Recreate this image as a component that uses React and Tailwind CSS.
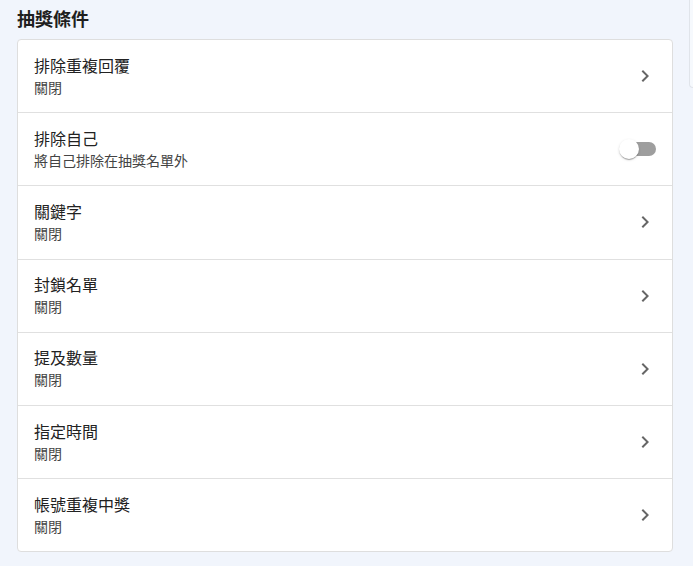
const rows = [
  { title: '排除重複回覆', sub: '關閉' },
  { title: '排除自己', sub: '將自己排除在抽獎名單外', toggle: true },
  { title: '關鍵字', sub: '關閉' },
  { title: '封鎖名單', sub: '關閉' },
  { title: '提及數量', sub: '關閉' },
  { title: '指定時間', sub: '關閉' },
  { title: '帳號重複中獎', sub: '關閉' },
];

const Chevron = () => (
  <svg viewBox="0 0 24 24" className="w-6 h-6 fill-[#666]">
    <path d="M10 6 8.59 7.41 13.17 12l-4.58 4.59L10 18l6-6z" />
  </svg>
);

const Toggle = () => (
  <div className="relative w-[38px] h-5 flex items-center">
    <div className="ml-[3px] w-[34px] h-[14px] rounded-full bg-[#9e9e9e]" />
    <div className="absolute left-0 top-0 w-5 h-5 rounded-full bg-white shadow-[0_2px_1px_-1px_rgba(0,0,0,0.2),0_1px_1px_0_rgba(0,0,0,0.14),0_1px_3px_0_rgba(0,0,0,0.12)]" />
  </div>
);

export default function App() {
  return (
    <div
      className="relative w-[693px] h-[566px] bg-[#f1f5fc] overflow-hidden"
      style={{ fontFamily: '"Noto Sans CJK TC", "Noto Sans", sans-serif' }}
    >
      {/* side panel edge */}
      <div className="absolute left-[689px] top-0 w-10 h-[88px] border-l border-b border-[#e0e4ea] rounded-bl bg-[#f6f9fd]" />

      <div className="px-[17px] pt-[5px]">
        <h2 className="text-[18px] leading-[26px] font-bold text-[#1f1f1f] mb-2">抽獎條件</h2>
        <div className="w-[656px] bg-white border border-[#dedede] rounded">
          {rows.map((row, i) => (
            <div
              key={row.title}
              className={`flex items-center pl-4 pr-[15px] ${i < rows.length - 1 ? 'h-[73.2px] border-b border-[#e0e0e0]' : 'h-[72px]'}`}
            >
              <div className="flex-1 flex flex-col pb-[1px]">
                <span className="text-[16px] leading-[22px] text-[#222]">{row.title}</span>
                <span className="text-[14px] leading-[22px] text-[#444]">{row.sub}</span>
              </div>
              {row.toggle ? <Toggle /> : <Chevron />}
            </div>
          ))}
        </div>
      </div>
    </div>
  );
}
